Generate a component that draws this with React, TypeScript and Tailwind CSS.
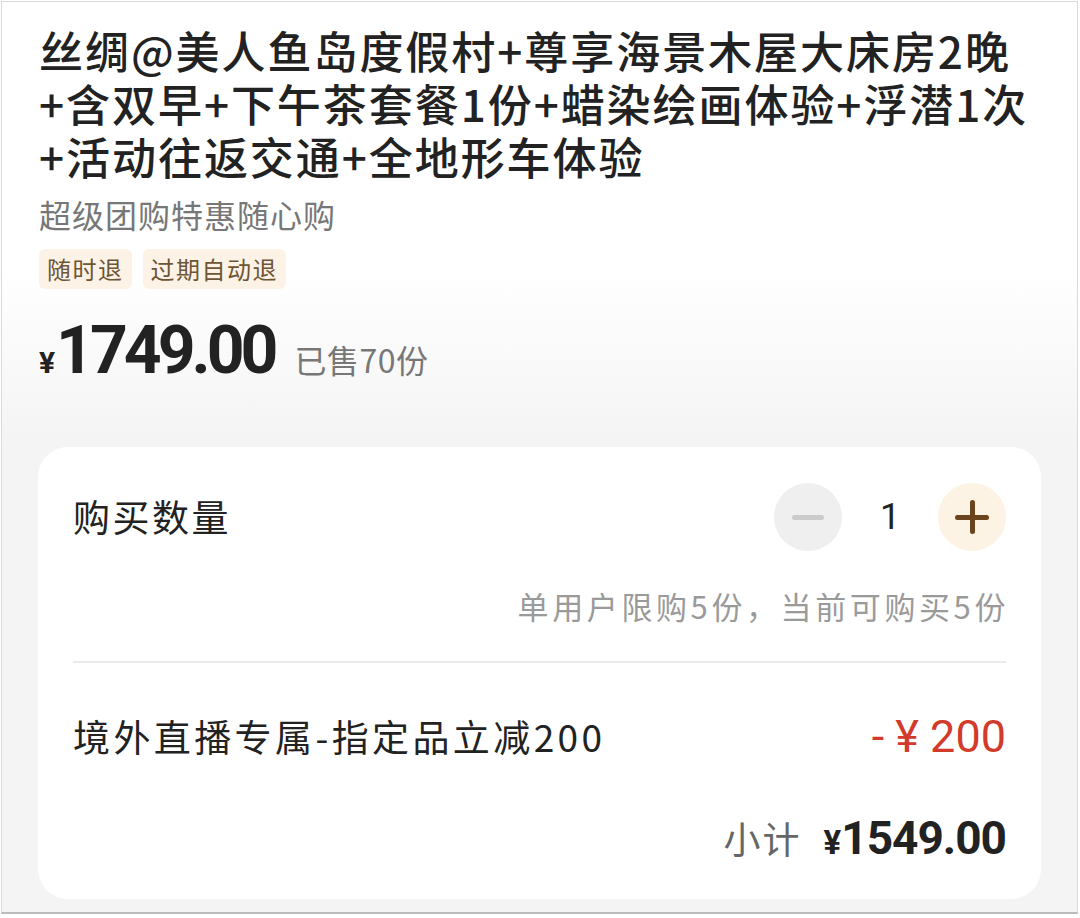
import React, { useState } from 'react';

const cjk = { fontFamily: '"Noto Sans CJK SC", "Noto Sans", sans-serif' };
const num = { fontFamily: 'Roboto, "Noto Sans CJK SC", sans-serif' };

const titleLines = [
  '丝绸@美人鱼岛度假村+尊享海景木屋大床房2晚',
  '+含双早+下午茶套餐1份+蜡染绘画体验+浮潜1次',
  '+活动往返交通+全地形车体验',
];

const App: React.FC = () => {
  const [count, setCount] = useState(1);
  const unit = 1749;
  const discount = 200;
  const subtotal = (unit * count - discount).toFixed(2);

  return (
    <div className="w-[1080px] h-[918px] bg-white" style={cjk}>
      <div className="ml-[1px] mt-[1px] w-[1077px] h-[913px] border border-[#dadada] border-b-2 border-b-[#bcbcbc] bg-[#f4f4f4] flex flex-col">
        {/* Header */}
        <div className="bg-linear-to-b from-white from-60% to-[#f4f4f4] px-[37px] pt-[22px] h-[445px] flex flex-col">
          <h1 className="text-[44px] leading-[53px] font-medium text-[#222] tracking-[1.95px] whitespace-nowrap">
            {titleLines.map((l) => (
              <div key={l}>{l}</div>
            ))}
          </h1>
          <p className="mt-[11px] text-[32px] leading-[40px] text-[#777] tracking-[1px]">超级团购特惠随心购</p>
          <div className="mt-[15px] flex gap-[11px]">
            {['随时退', '过期自动退'].map((t) => (
              <span
                key={t}
                className="h-[40px] px-[8px] rounded-[6px] bg-[#fcf3e6] text-[#6e5535] text-[24px] leading-[40px] tracking-[1.5px]"
              >
                {t}
              </span>
            ))}
          </div>
          <div className="mt-[26px] flex items-baseline h-[72px]">
            <span className="text-[30px] font-bold text-[#222]" style={num}>¥</span>
            <span className="text-[66px] leading-[72px] font-bold text-[#222] tracking-[-4px] ml-[1px]" style={num}>
              1749.00
            </span>
            <span className="ml-[20px] text-[32px] text-[#777] tracking-[0.5px]">已售70份</span>
          </div>
        </div>

        {/* Purchase card */}
        <div className="mx-[36px] bg-white rounded-[30px] px-[35px] pt-[36px] pb-[40px]">
          <div className="flex items-center justify-between h-[68px]">
            <span className="text-[37px] text-[#222] tracking-[2.5px]">购买数量</span>
            <div className="flex items-center">
              <button
                onClick={() => setCount((c) => Math.max(1, c - 1))}
                className="w-[68px] h-[68px] rounded-full bg-[#efefef] flex items-center justify-center"
              >
                <span className="block w-[32px] h-[5px] rounded-full bg-[#cbcbcb]" />
              </button>
              <span className="w-[96px] text-center text-[36px] text-[#222]" style={num}>{count}</span>
              <button
                onClick={() => setCount((c) => Math.min(5, c + 1))}
                className="w-[68px] h-[68px] rounded-full bg-[#fdf3e4] flex items-center justify-center relative"
              >
                <span className="absolute w-[34px] h-[5px] rounded-full bg-[#6b431d]" />
                <span className="absolute w-[5px] h-[34px] rounded-full bg-[#6b431d]" />
              </button>
            </div>
          </div>
          <p className="mt-[37px] text-right text-[31px] leading-[36px] text-[#9a9a9a] tracking-[3.6px] -mr-[3px]">
            单用户限购5份，当前可购买5份
          </p>
          <div className="mt-[37px] h-[2px] bg-[#ebebeb]" />
          <div className="mt-[50px] flex items-center justify-between h-[48px]">
            <span className="text-[37px] text-[#222] tracking-[3.4px]">境外直播专属-指定品立减200</span>
            <span className="text-[45px] text-[#d23b2c]" style={num}>-&nbsp;¥&nbsp;200</span>
          </div>
          <div className="mt-[50px] flex items-baseline justify-end h-[48px]">
            <span className="text-[37px] text-[#666] tracking-[2px]">小计</span>
            <span className="ml-[22px] text-[33px] font-bold text-[#222]" style={num}>¥</span>
            <span className="text-[46px] leading-[48px] font-bold text-[#222] tracking-[-1px]" style={num}>{subtotal}</span>
          </div>
        </div>
      </div>
    </div>
  );
};

export default App;
